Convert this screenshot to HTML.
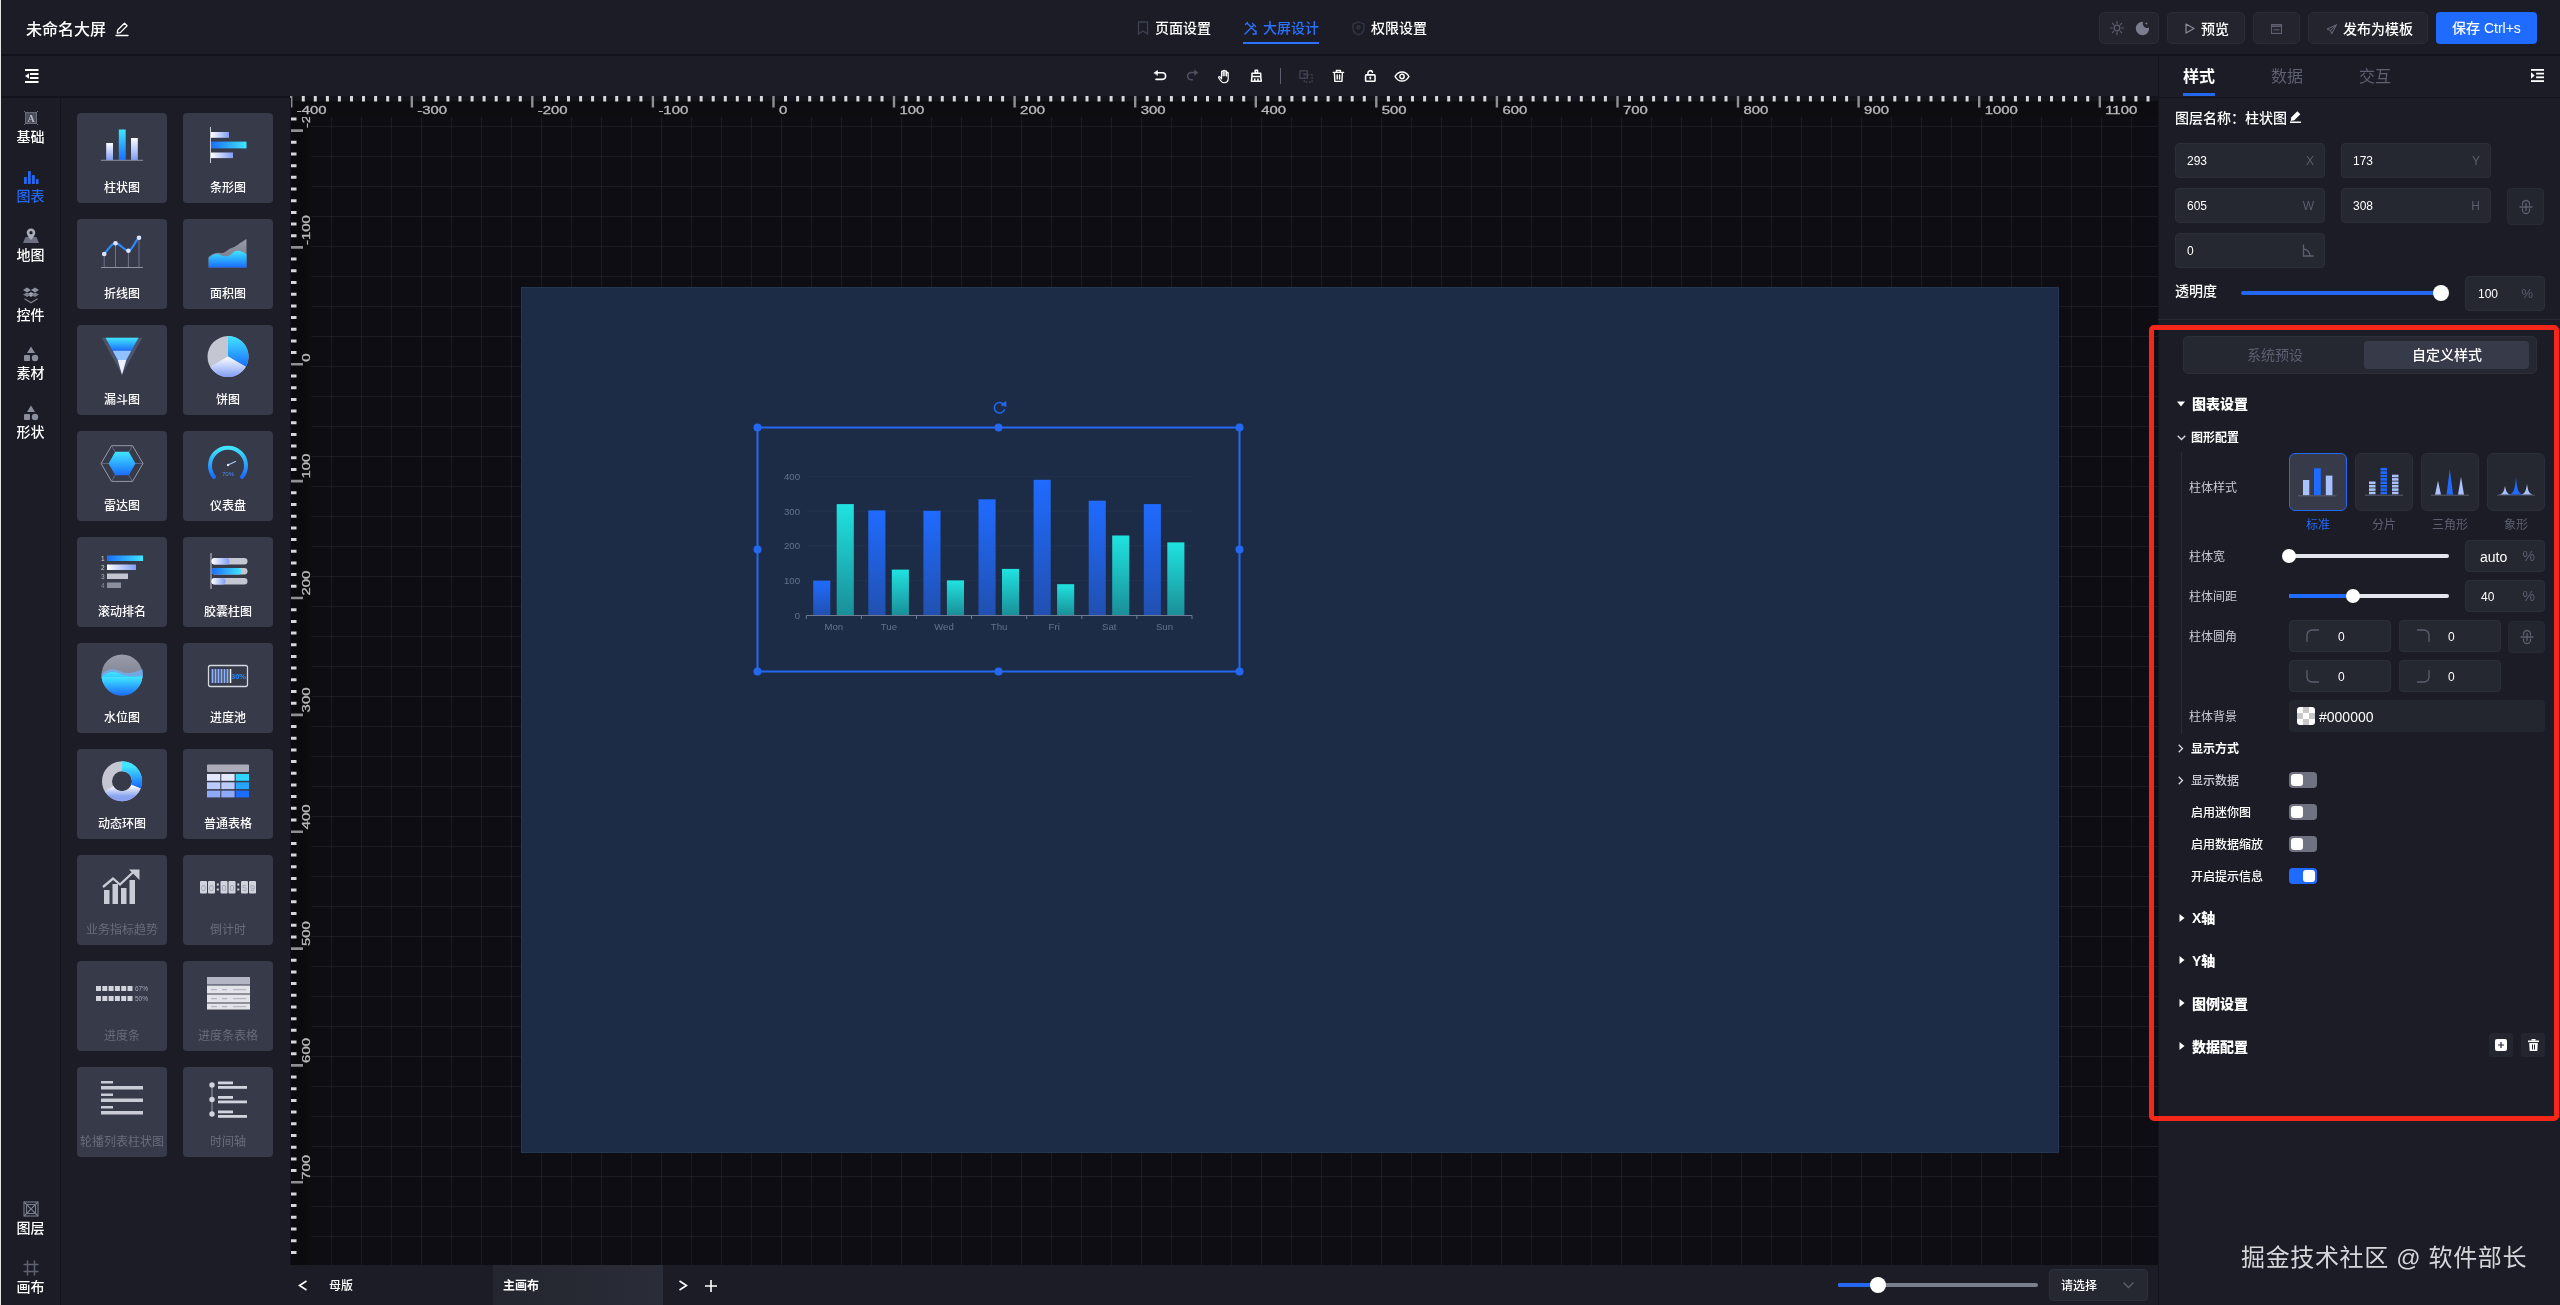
<!DOCTYPE html>
<html lang="zh-CN">
<head>
<meta charset="utf-8">
<title>未命名大屏</title>
<style>
*{box-sizing:border-box;margin:0;padding:0}
html,body{width:2560px;height:1305px;overflow:hidden;background:#1b1c26}
body{position:relative;font-family:"Liberation Sans","Noto Sans CJK SC",sans-serif;color:#fff;font-size:12px;line-height:1}
.abs{position:absolute}
svg{display:block;overflow:visible}
#wrap{position:absolute;left:0;top:0;width:2560px;height:1305px;will-change:transform}
.t{position:absolute;white-space:nowrap;line-height:1}
/* header */
#hdr{position:absolute;left:0;top:0;width:2560px;height:56px;background:#1b1c26;border-bottom:2px solid #12121a}
#tb{position:absolute;left:0;top:56px;width:2560px;height:40px;background:#1b1c26}
#tbline{position:absolute;left:0;top:96px;width:290px;height:2px;background:#13131b}
.btn{position:absolute;top:12px;height:32px;border:1px solid #2b2d38;background:#23242e;border-radius:5px}
/* left nav */
#nav{position:absolute;left:0;top:98px;width:61px;height:1207px;background:#1b1c26;border-right:1px solid #12121a}
.ni{position:absolute;left:0;width:61px;text-align:center;font-size:14px;font-weight:500;color:#fff}
.ni svg{margin:0 auto 4px}
/* palette */
#pal{position:absolute;left:62px;top:98px;width:228px;height:1207px;background:#1b1c26}
.card{position:absolute;width:90px;height:90px;background:#373a49;border-radius:4px}
.card span{position:absolute;left:-10px;right:-10px;top:69px;text-align:center;font-size:12px;font-weight:500;color:#fff;white-space:nowrap}
.card.dis span{color:#686c7c;font-weight:400}
.card svg{position:absolute;left:25px;top:10px}
/* right panel */
#rp{position:absolute;left:2158px;top:56px;width:402px;height:1249px;background:#1b1c26}
.inp{position:absolute;height:35px;background:#252731;border:1px solid #2c2e3a;border-radius:4px}
.inp b{position:absolute;left:11px;top:11px;font-weight:400;font-size:12px;color:#fff}
.inp i{position:absolute;right:10px;top:11px;font-style:normal;font-size:12px;color:#5a5e6e}
.lab{position:absolute;font-size:12px;color:#c9cbd3;white-space:nowrap}
.sw{position:absolute;width:28px;height:16px;border-radius:4px;background:#6f7280}
.sw:after{content:"";position:absolute;left:2px;top:2px;width:12px;height:12px;border-radius:3px;background:#fff}
.sw.on{background:#1f6bff}
.sw.on:after{left:14px}
</style>
</head>
<body>
<div id="wrap">
<!-- ================= HEADER ================= -->
<div id="hdr">
  <div class="t" style="left:26px;top:22px;font-size:16px;font-weight:500">未命名大屏</div>
  <svg class="abs" style="left:114px;top:20.500px" width="16" height="16" viewBox="0 0 16 16" fill="none" stroke="#fff" stroke-width="1.3" stroke-linecap="round" stroke-linejoin="round"><path d="M10.5 2.2l2.6 2.6L6.3 11.6l-3 .5.4-3.1z"/><path d="M2 14.5h12"/></svg>
  <!-- center tabs -->
  <svg class="abs" style="left:1137px;top:21px" width="12" height="14" viewBox="0 0 12 14" fill="none" stroke="#3d404e" stroke-width="1.3"><path d="M1.5 1h9v12l-4.5-3-4.5 3z"/></svg>
  <div class="t" style="left:1155px;top:21px;font-size:14px;font-weight:500">页面设置</div>
  <svg class="abs" style="left:1243px;top:21px" width="15" height="15" viewBox="0 0 15 15" fill="none" stroke="#2a72ff" stroke-width="1.4" stroke-linecap="round"><path d="M2 13L11 4M9.5 2.5l3 3M4 2l9 9M2.5 3.5l2-2M10 13h3v-3"/></svg>
  <div class="t" style="left:1263px;top:21px;font-size:14px;font-weight:500;color:#2a72ff">大屏设计</div>
  <div class="abs" style="left:1243px;top:42px;width:76px;height:2px;background:#2a72ff"></div>
  <svg class="abs" style="left:1352px;top:21px" width="13" height="15" viewBox="0 0 13 15" fill="none" stroke="#343744" stroke-width="1.3"><path d="M6.5 1l5.5 2v4.5c0 3-2.4 5.3-5.5 6.5C3.400 12.800 1 10.500 1 7.500V3z"/><circle cx="6.500" cy="6.500" r="1.500"/></svg>
  <div class="t" style="left:1371px;top:21px;font-size:14px;font-weight:500">权限设置</div>
  <!-- right buttons -->
  <div class="btn" style="left:2099px;width:60px">
    <svg class="abs" style="left:9px;top:7px" width="16" height="16" viewBox="0 0 16 16" fill="none" stroke="#5d606f" stroke-width="1.2" stroke-linecap="round"><circle cx="8" cy="8" r="2.800"/><path d="M8 1.500v1.800M8 12.700v1.800M1.500 8h1.800M12.700 8h1.800M3.400 3.400l1.300 1.300M11.300 11.300l1.300 1.300M3.400 12.600l1.300-1.300M11.300 4.700l1.300-1.300"/></svg>
    <svg class="abs" style="left:35px;top:7px" width="16" height="16" viewBox="0 0 16 16" fill="#7a7d8c"><path d="M8.200 1.800a4.300 4.300 0 0 0 5.900 5.600A6.700 6.700 0 1 1 8.200 1.800z"/><path d="M11.300 2l.45 1.050 1.050.45-1.050.45-.45 1.050-.45-1.050L9.800 3.500l1.050-.45z"/></svg>
  </div>
  <div class="btn" style="left:2167px;width:78px">
    <svg class="abs" style="left:17px;top:10px" width="10" height="11" viewBox="0 0 10 11" fill="none" stroke="#8b8e9b" stroke-width="1.200" stroke-linejoin="round"><path d="M1 1l8 4.500-8 4.500z"/></svg>
    <div class="t" style="left:33px;top:9px;font-size:14px;font-weight:500">预览</div>
  </div>
  <div class="btn" style="left:2253px;width:47px">
    <svg class="abs" style="left:17px;top:11px" width="11" height="10" viewBox="0 0 11 10" fill="none" stroke="#5d606f" stroke-width="1.100"><rect x=".55" y=".55" width="9.900" height="8.900"/><path d="M.5 2.200h10" stroke-width="1.600"/><path d="M2.500 5.800h6"/></svg>
  </div>
  <div class="btn" style="left:2308px;width:120px">
    <svg class="abs" style="left:17px;top:11px" width="11.500" height="11" viewBox="0 0 14 14" fill="none" stroke="#6a6d7b" stroke-width="1.200" stroke-linejoin="round"><path d="M13 1L1 6.500l4.500 1.800L7 12.500z"/><path d="M13 1L5.500 8.300"/></svg>
    <div class="t" style="left:34px;top:9px;font-size:14px;font-weight:500">发布为模板</div>
  </div>
  <div class="abs" style="left:2436px;top:12px;width:101px;height:32px;background:#1f6bff;border-radius:4px">
    <div class="t" style="left:16px;top:9px;font-size:14px;font-weight:500">保存 Ctrl+s</div>
  </div>
</div>
<!-- ================= TOOLBAR ================= -->
<div id="tb">
  <svg class="abs" style="left:25px;top:13px" width="14" height="14" viewBox="0 0 14 14" fill="#fff"><rect x="0" y="0" width="13.500" height="2"/><rect x="0" y="12" width="13.500" height="2"/><rect x="5" y="4" width="8.500" height="2"/><rect x="5" y="8" width="8.500" height="2"/><path d="M0 7l4-2.800v5.600z"/></svg>
</div>
<div id="tbline"></div>
<!-- toolbar icons (centres at y=76) -->
<svg class="abs" style="left:1153px;top:70px" width="14" height="12" viewBox="0 0 14 12" fill="none" stroke="#fff" stroke-width="1.600" stroke-linecap="round" stroke-linejoin="round"><path d="M3.500 2.800h5.800a3.300 3.300 0 0 1 0 6.600H3"/><path d="M1.200 2.800L4.500.5v4.600z" fill="#fff" stroke-width=".6"/></svg>
<svg class="abs" style="left:1185px;top:68px" width="14" height="14" viewBox="0 0 14 14" fill="none" stroke="#4e5161" stroke-width="1.500" stroke-linecap="round" stroke-linejoin="round"><path d="M10 4.500H6.300a3.600 3.600 0 0 0-.3 7.200h1.500"/><path d="M12.800 4.500L9.500 2v5z" fill="#4e5161" stroke-width=".6"/></svg>
<svg class="abs" style="left:1217.300px;top:68.500px" width="13.300" height="15" viewBox="0 0 16 18" fill="none" stroke="#fff" stroke-width="1.450" stroke-linecap="round" stroke-linejoin="round"><path d="M5.500 9V3.500a1 1 0 0 1 2 0V8M7.500 8V2.500a1 1 0 0 1 2 0V8M9.500 8V3.200a1 1 0 0 1 2 0V8.500M11.500 8.500V5a1 1 0 0 1 2 0v6.500c0 3-2 5-4.800 5-2.400 0-3.600-1.200-4.700-3L2 10.500c-.5-1 .8-1.900 1.600-1l1.900 2.200V9"/></svg>
<svg class="abs" style="left:1249.700px;top:69px" width="12.700" height="13.500" viewBox="0 0 16 17" fill="none" stroke="#fff" stroke-width="1.900" stroke-linejoin="round"><path d="M6.500 1.500h3v4h-3z"/><path d="M2.500 5.500h11v4h-11z"/><path d="M2.500 9.500L1.800 15.500h12.400L13.500 9.500"/><path d="M6 12v3.500M10 12v3.500"/></svg>
<div class="abs" style="left:1280px;top:68px;width:1px;height:16px;background:#5b5e6c"></div>
<svg class="abs" style="left:1299px;top:69.500px" width="14" height="13" viewBox="0 0 16 15" fill="none" stroke="#454857" stroke-width="1.400"><rect x="1" y="1" width="8.500" height="8.500"/><rect x="6" y="5.500" width="9" height="8.500" stroke-dasharray="2.200 1.600"/><path d="M4.500 4.500h5v5" stroke-width="1.100"/></svg>
<svg class="abs" style="left:1331.600px;top:69px" width="12.800" height="13.600" viewBox="0 0 16 17" fill="none" stroke="#fff" stroke-width="1.750" stroke-linejoin="round" stroke-linecap="round"><path d="M1.500 4.200h13"/><path d="M5.500 4V1.800h5V4"/><path d="M3 4.500l.6 11h8.800l.6-11"/><path d="M6.500 7.500v5M9.500 7.500v5"/></svg>
<svg class="abs" style="left:1363.700px;top:69px" width="12.600" height="13.400" viewBox="0 0 16 17" fill="none" stroke="#fff" stroke-width="2" stroke-linejoin="round" stroke-linecap="round"><rect x="2" y="7.500" width="12" height="8" rx="1"/><path d="M5 7.500V5a3 3 0 0 1 5.800-1"/><path d="M8 10.500v2"/></svg>
<svg class="abs" style="left:1394px;top:69.500px" width="16" height="13" viewBox="0 0 18 15" fill="none" stroke="#fff" stroke-width="1.700" stroke-linejoin="round"><path d="M1 7.500C3 3.900 5.800 2.200 9 2.200s6 1.700 8 5.300c-2 3.600-4.800 5.300-8 5.300S3 11.100 1 7.500z"/><circle cx="9" cy="7.500" r="2.500"/></svg>
<!-- ================= LEFT NAV ================= -->
<div id="nav">
<div class="ni" style="top:12px;color:#fff"><svg width="16" height="16" viewBox="0 0 16 16"><rect x="2.500" y="2.500" width="11" height="11" fill="#4a4c5a" stroke="#777a88" stroke-width=".8"/><path d="M1 1l2.500 2.500M15 1l-2.500 2.500M1 15l2.500-2.500M15 15l-2.500-2.500" stroke="#6b6e7c" stroke-width="1"/><text x="8" y="12" font-size="10" font-family="Liberation Serif,serif" font-weight="700" text-anchor="middle" fill="#b8bac4">A</text></svg>基础</div>
<div class="ni" style="top:71px;color:#2468f2"><svg width="16" height="16" viewBox="0 0 16 16" fill="#2468f2"><rect x="1" y="8" width="2.800" height="7" rx=".6"/><rect x="5" y="2" width="2.800" height="13" rx=".6"/><rect x="9" y="6" width="2.800" height="9" rx=".6"/><rect x="13" y="10" width="2.500" height="5" rx=".6"/></svg>图表</div>
<div class="ni" style="top:130px;color:#fff"><svg width="18" height="16" viewBox="0 0 18 16"><path d="M1 15l2.500-6h11l2.500 6z" fill="#6d7080"/><path d="M9 0.500c-2.500 0-4.300 1.900-4.300 4.200 0 2.700 4.300 7.300 4.300 7.300s4.300-4.600 4.300-7.300c0-2.300-1.800-4.200-4.300-4.200z" fill="#a9acb8"/><circle cx="9" cy="4.700" r="1.600" fill="#1c1d27"/></svg>地图</div>
<div class="ni" style="top:189px;color:#fff"><svg width="18" height="17" viewBox="0 0 18 17" fill="#7b7e8d"><path d="M5 0.500l4 2.500-4 2.500-4-2.500zM13 0.500l4 2.500-4 2.500-4-2.500z" fill="#8e91a0"/><path d="M9 5l4 2.500-4 2.500-4-2.500z" fill="#a5a8b5"/><path d="M1 7.500l4-2 4 2.500 4-2.500 4 2-4 2.500-4-2.300-4 2.300z"/><path d="M2.500 11l6.500 4 6.500-4v1.500l-6.500 4-6.500-4z"/></svg>控件</div>
<div class="ni" style="top:248px;color:#fff"><svg width="18" height="16" viewBox="0 0 18 16" fill="#8a8d9b"><path d="M9 0.500l4 6.500h-8z"/><rect x="2" y="9" width="6" height="6" rx="1"/><circle cx="13" cy="12" r="3.200"/></svg>素材</div>
<div class="ni" style="top:307px;color:#fff"><svg width="18" height="16" viewBox="0 0 18 16" fill="#8a8d9b"><path d="M9 0.500l4 6.500h-8z"/><rect x="2" y="9" width="6" height="6" rx="1"/><circle cx="13" cy="12" r="3.200"/></svg>形状</div>
<div class="ni" style="top:1103px;color:#fff"><svg width="16" height="16" viewBox="0 0 16 16" fill="none" stroke="#7b7e8d" stroke-width="1.100"><rect x="1" y="1" width="14" height="14"/><rect x="3.500" y="3.500" width="9" height="9"/><path d="M1 1l14 14M15 1L1 15"/></svg>图层</div>
<div class="ni" style="top:1162px;color:#fff"><svg width="16" height="16" viewBox="0 0 16 16" fill="none" stroke="#5f6271" stroke-width="1.500"><path d="M4.500 0.500v15M11.500 0.500v15M0.500 4.500h15M0.500 11.500h15"/></svg>画布</div>
</div>
<!-- ================= PALETTE ================= -->
<div id="pal">
<svg width="0" height="0" style="position:absolute"><defs>
<linearGradient id="gB" x1="0" y1="0" x2="0" y2="1"><stop offset="0" stop-color="#40e6ff"/><stop offset="1" stop-color="#1a6dff"/></linearGradient>
<linearGradient id="gW" x1="0" y1="0" x2="0" y2="1"><stop offset="0" stop-color="#ffffff"/><stop offset="1" stop-color="#7f9df5"/></linearGradient>
<linearGradient id="gBh" x1="1" y1="0" x2="0" y2="0"><stop offset="0" stop-color="#40e6ff"/><stop offset="1" stop-color="#1a6dff"/></linearGradient>
<linearGradient id="gWh" x1="0" y1="0" x2="1" y2="0"><stop offset="0" stop-color="#ffffff"/><stop offset="1" stop-color="#7f9df5"/></linearGradient>
<linearGradient id="gG" x1="0" y1="0" x2="0" y2="1"><stop offset="0" stop-color="#9a9caa"/><stop offset="1" stop-color="#6d7080"/></linearGradient>
<linearGradient id="gGw" x1="0" y1="0" x2="0" y2="1"><stop offset="0" stop-color="#e2e3ea"/><stop offset="1" stop-color="#b4b6c4"/></linearGradient>
</defs></svg>
<!-- CARDS_BEGIN -->
<div class="card" style="left:15px;top:15px"><svg width="40" height="44" viewBox="0 0 40 44"><rect x="4.200" y="20" width="6.800" height="17" fill="url(#gW)"/><rect x="16.800" y="6.500" width="6.900" height="30.500" fill="url(#gB)"/><rect x="29" y="15" width="6.800" height="22" fill="url(#gW)"/><rect x="-1" y="36.800" width="42" height="1" fill="#8d90a0"/></svg><span>柱状图</span></div>
<div class="card" style="left:121px;top:15px"><svg width="40" height="44" viewBox="0 0 40 44"><rect x="2" y="4" width="1" height="36" fill="#c9cbd6"/><rect x="3" y="9" width="18" height="5.800" fill="url(#gWh)"/><rect x="3" y="18.600" width="35.500" height="6.800" fill="url(#gBh)"/><rect x="3" y="29.500" width="22" height="5.600" fill="url(#gWh)"/></svg><span>条形图</span></div>
<div class="card" style="left:15px;top:121px"><svg width="40" height="44" viewBox="0 0 40 44"><path d="M2.200 25V38M13.500 14V38M26.400 22V38M37 9V38" stroke="#80839a" stroke-width=".8"/><rect x="-1" y="38" width="42" height="1" fill="#8d90a0"/><path d="M2.200 25C6 21 9.500 14.200 13.500 14.200s9 7.600 12.900 7.600S34 10 37 8.700" fill="none" stroke="#2b8cff" stroke-width="2.200" stroke-linecap="round"/><circle cx="2.200" cy="25" r="2.300" fill="#dfe3ff"/><circle cx="13.500" cy="14.200" r="2.300" fill="#dfe3ff"/><circle cx="26.400" cy="21.800" r="2.300" fill="#dfe3ff"/><circle cx="37" cy="8.700" r="2.300" fill="#dfe3ff"/></svg><span>折线图</span></div>
<div class="card" style="left:121px;top:121px"><svg width="40" height="44" viewBox="0 0 40 44"><path d="M.6 38.500V28c5-4 8-5 12-4s7-4 11-5 8-5 14.900-9v28.500z" fill="url(#gG)"/><path d="M.6 38.500V29c4-4 8-5 12-3s8 2 12-2 9-2 13.900 1v13.500z" fill="url(#gB)"/></svg><span>面积图</span></div>
<div class="card" style="left:15px;top:227px"><svg width="40" height="44" viewBox="0 0 40 44"><path d="M-.2 2.800h40.500L20 39.800z" fill="#5d6b8f" opacity=".55"/><path d="M3.500 2.800h33l-7.200 13h-18.600z" fill="url(#gB)"/><path d="M10.700 15.800h18.600L24.300 25h-8.600z" fill="#8fc0ff"/><path d="M15.700 25h8.600L20 39.800z" fill="#eef1ff"/></svg><span>漏斗图</span></div>
<div class="card" style="left:121px;top:227px"><svg width="40" height="44" viewBox="0 0 40 44"><circle cx="20" cy="21.600" r="20.500" fill="#c4c6d2"/><path d="M20 21.600V1.100a20.500 20.500 0 0 1 17.750 30.750z" fill="url(#gB)"/><path d="M20 21.600l17.750 10.250a20.500 20.500 0 0 1-35.500 0z" fill="url(#gW)"/></svg><span>饼图</span></div>
<div class="card" style="left:15px;top:333px"><svg width="40" height="44" viewBox="0 0 40 44"><path d="M-.9 22.500L9.500 4.700h21L41 22.500 30.500 40.400h-21z" fill="none" stroke="#9799a8" stroke-width="1"/><path d="M-.9 22.500H41M9.500 4.700l21 35.700M30.500 4.700l-21 35.700" stroke="#80839a" stroke-width=".6"/><path d="M6.500 22.500l6.750-11.700h13.500L33.500 22.500l-6.750 11.700h-13.500z" fill="url(#gB)"/></svg><span>雷达图</span></div>
<div class="card" style="left:121px;top:333px"><svg width="40" height="44" viewBox="0 0 40 44"><path d="M6 36A18 18 0 1 1 34 36" fill="none" stroke="url(#gB)" stroke-width="4" stroke-linecap="round"/><path d="M20 24l7.500-3.500" stroke="#9fd0ff" stroke-width="1.200" stroke-linecap="round"/><circle cx="20" cy="24" r="1.200" fill="#dfe3ff"/><text x="20" y="35" font-size="6" text-anchor="middle" fill="#3f8dff" font-family="Liberation Sans,sans-serif">70%</text></svg><span>仪表盘</span></div>
<div class="card" style="left:15px;top:439px"><svg width="40" height="44" viewBox="0 0 40 44"><text x="-1" y="13.500" font-size="6.500" fill="#d8dae4" font-family="Liberation Sans,sans-serif">1</text><text x="-1" y="22.500" font-size="6.500" fill="#d8dae4" font-family="Liberation Sans,sans-serif">2</text><text x="-1" y="31.500" font-size="6.500" fill="#b0b2c0" font-family="Liberation Sans,sans-serif">3</text><text x="-1" y="40.500" font-size="6.500" fill="#8b8e9d" font-family="Liberation Sans,sans-serif">4</text><rect x="5" y="8.500" width="36" height="5.500" fill="url(#gBh)"/><rect x="5" y="17.500" width="29" height="5.500" fill="url(#gWh)"/><rect x="5" y="26.500" width="21" height="5.500" fill="#c2c4d0"/><rect x="5" y="35.500" width="14" height="5.500" fill="#8b8e9d"/></svg><span>滚动排名</span></div>
<div class="card" style="left:121px;top:439px"><svg width="40" height="44" viewBox="0 0 40 44"><rect x="2.500" y="6" width="1" height="36" fill="#c9cbd6"/><rect x="3.500" y="11" width="36" height="6.500" rx="3.250" fill="#c4c6d2"/><rect x="3.500" y="11" width="18" height="6.500" rx="3.250" fill="url(#gWh)"/><rect x="3.500" y="21" width="36" height="6.500" rx="3.250" fill="#c4c6d2"/><rect x="3.500" y="21" width="30" height="6.500" rx="3.250" fill="url(#gBh)"/><rect x="3.500" y="31" width="36" height="6.500" rx="3.250" fill="#c4c6d2"/><rect x="3.500" y="31" width="14" height="6.500" rx="3.250" fill="url(#gWh)"/></svg><span>胶囊柱图</span></div>
<div class="card" style="left:15px;top:545px"><svg width="40" height="44" viewBox="0 0 40 44"><circle cx="20" cy="22" r="20.500" fill="url(#gG)"/><path d="M-.5 21c5-5 12-6 18-3s13 2.500 23-2A20.500 20.500 0 0 1 -.3 25z" fill="#6db5ff" opacity=".7"/><path d="M-.4 24c6-6 13-6 19-3s14 3 21.800 1.200A20.500 20.500 0 0 1 -.4 24z" fill="url(#gB)"/><path d="M-.4 24a20.500 20.500 0 0 0 40.800 0z" fill="url(#gB)"/></svg><span>水位图</span></div>
<div class="card" style="left:121px;top:545px"><svg width="40" height="44" viewBox="0 0 40 44"><rect x="0.500" y="12.500" width="39" height="21" rx="2" fill="none" stroke="#d3d5df" stroke-width="1.300"/><path d="M4.500 16v14M7.500 16v14M10.500 16v14M13.500 16v14M16.500 16v14M19.500 16v14" stroke="#8fb4ff" stroke-width="1.800"/><path d="M22.500 16v14" stroke="#fff" stroke-width="1.500"/><text x="30.500" y="26" font-size="7.500" font-weight="700" text-anchor="middle" fill="#2b8cff" font-family="Liberation Sans,sans-serif">30%</text></svg><span>进度池</span></div>
<div class="card" style="left:15px;top:651px"><svg width="40" height="44" viewBox="0 0 40 44"><circle cx="20" cy="22.200" r="15" fill="none" stroke="#c4c6d2" stroke-width="10"/><path d="M20 7.200A15 15 0 0 1 34 27.600" fill="none" stroke="url(#gB)" stroke-width="10"/><path d="M34 27.600A15 15 0 0 1 7 29.700" fill="none" stroke="url(#gW)" stroke-width="10" opacity=".85"/></svg><span>动态环图</span></div>
<div class="card" style="left:121px;top:651px"><svg width="40" height="44" viewBox="0 0 40 44"><rect x="-1" y="5.500" width="42" height="7.500" rx="1" fill="#a9abb9"/><rect x="-1" y="15" width="13.300" height="6.800" fill="#e4e8ff"/><rect x="13.300" y="15" width="13.300" height="6.800" fill="#e4e8ff"/><rect x="-1" y="23.300" width="13.300" height="6.800" fill="#bccbff"/><rect x="13.300" y="23.300" width="13.300" height="6.800" fill="#bccbff"/><rect x="-1" y="31.600" width="13.300" height="6.800" fill="#8fa9fa"/><rect x="13.300" y="31.600" width="13.300" height="6.800" fill="#8fa9fa"/><rect x="27.700" y="15" width="13.300" height="6.800" fill="#2fd4ff"/><rect x="27.700" y="23.300" width="13.300" height="6.800" fill="#26a4ff"/><rect x="27.700" y="31.600" width="13.300" height="6.800" fill="#1a6dff"/></svg><span>普通表格</span></div>
<div class="card dis" style="left:15px;top:757px"><svg width="40" height="44" viewBox="0 0 40 44"><g fill="#c9cbd5"><rect x="2" y="25" width="5.500" height="14"/><rect x="10.500" y="19" width="5.500" height="20"/><rect x="19" y="23" width="5.500" height="16"/><rect x="27.500" y="15" width="5.500" height="24"/></g><path d="M1 22l10-8.500 7 6 15-14" fill="none" stroke="#c9cbd5" stroke-width="2.300"/><path d="M27 4.500h10.500V15z" fill="#c9cbd5"/></svg><span>业务指标趋势</span></div>
<div class="card dis" style="left:121px;top:757px"><svg width="40" height="44" viewBox="0 0 40 44"><rect x="-8" y="16" width="7" height="12.500" rx="1" fill="#d2d4dd"/><text x="-4.5" y="26" font-size="9" text-anchor="middle" fill="#9c9fae" font-family="Liberation Sans,sans-serif">0</text><rect x="0" y="16" width="7" height="12.500" rx="1" fill="#d2d4dd"/><text x="3.5" y="26" font-size="9" text-anchor="middle" fill="#9c9fae" font-family="Liberation Sans,sans-serif">0</text><rect x="12.5" y="16" width="7" height="12.500" rx="1" fill="#d2d4dd"/><text x="16.0" y="26" font-size="9" text-anchor="middle" fill="#9c9fae" font-family="Liberation Sans,sans-serif">0</text><rect x="20.5" y="16" width="7" height="12.500" rx="1" fill="#d2d4dd"/><text x="24.0" y="26" font-size="9" text-anchor="middle" fill="#9c9fae" font-family="Liberation Sans,sans-serif">0</text><rect x="33" y="16" width="7" height="12.500" rx="1" fill="#d2d4dd"/><text x="36.5" y="26" font-size="9" text-anchor="middle" fill="#9c9fae" font-family="Liberation Sans,sans-serif">5</text><rect x="41" y="16" width="7" height="12.500" rx="1" fill="#d2d4dd"/><text x="44.5" y="26" font-size="9" text-anchor="middle" fill="#9c9fae" font-family="Liberation Sans,sans-serif">9</text><g fill="#d2d4dd"><rect x="8.800" y="18.500" width="2" height="2"/><rect x="8.800" y="23.500" width="2" height="2"/><rect x="29.300" y="18.500" width="2" height="2"/><rect x="29.300" y="23.500" width="2" height="2"/></g></svg><span>倒计时</span></div>
<div class="card dis" style="left:15px;top:863px"><svg width="40" height="44" viewBox="0 0 40 44"><g fill="#d2d4dd"><rect x="-6.0" y="15" width="5" height="5"/><rect x="0.3" y="15" width="5" height="5"/><rect x="6.6" y="15" width="5" height="5"/><rect x="12.9" y="15" width="5" height="5"/><rect x="19.2" y="15" width="5" height="5"/><rect x="25.5" y="15" width="5" height="5"/><rect x="-6.0" y="25" width="5" height="5"/><rect x="0.3" y="25" width="5" height="5"/><rect x="6.6" y="25" width="5" height="5"/><rect x="12.9" y="25" width="5" height="5"/><rect x="19.2" y="25" width="5" height="5"/><rect x="25.5" y="25" width="5" height="5"/></g><text x="33" y="20" font-size="6.500" fill="#a9abb8" font-family="Liberation Sans,sans-serif">67%</text><text x="33" y="30" font-size="6.500" fill="#a9abb8" font-family="Liberation Sans,sans-serif">50%</text></svg><span>进度条</span></div>
<div class="card dis" style="left:121px;top:863px"><svg width="40" height="44" viewBox="0 0 40 44"><rect x="-1" y="6" width="43" height="7.500" fill="#b4b6c3"/><rect x="-1" y="14.500" width="43" height="8" fill="#e3e4ea"/><rect x="-1" y="23.500" width="43" height="8" fill="#e3e4ea"/><rect x="-1" y="32.500" width="43" height="6" fill="#e3e4ea"/><g fill="#b4b6c3"><rect x="3" y="18" width="6" height="1.200"/><rect x="14" y="18" width="5" height="1.200"/><rect x="25" y="18" width="13" height="1.200"/><rect x="3" y="27" width="6" height="1.200"/><rect x="14" y="27" width="5" height="1.200"/><rect x="25" y="27" width="13" height="1.200"/><rect x="3" y="35" width="6" height="1.200"/><rect x="14" y="35" width="5" height="1.200"/><rect x="25" y="35" width="13" height="1.200"/></g></svg><span>进度条表格</span></div>
<div class="card dis" style="left:15px;top:969px"><svg width="40" height="44" viewBox="0 0 40 44"><g fill="#c9cbd5"><rect x="-1" y="4" width="12" height="2.500"/><rect x="-1" y="9" width="42" height="3.500"/><rect x="-1" y="16.500" width="12" height="2.500"/><rect x="-1" y="21.500" width="42" height="3.500"/><rect x="-1" y="29" width="12" height="2.500"/><rect x="-1" y="34" width="42" height="3.500"/></g></svg><span>轮播列表柱状图</span></div>
<div class="card dis" style="left:121px;top:969px"><svg width="40" height="44" viewBox="0 0 40 44"><path d="M4 8v29" stroke="#9c9fae" stroke-width="1"/><g fill="#d2d4dd"><circle cx="4" cy="8" r="2.700"/><circle cx="4" cy="22.500" r="2.700"/><circle cx="4" cy="37" r="2.700"/><rect x="10" y="4.500" width="15" height="2.800"/><rect x="10" y="9" width="29" height="2.800"/><rect x="10" y="19" width="15" height="2.800"/><rect x="10" y="23.500" width="29" height="2.800"/><rect x="10" y="33.500" width="15" height="2.800"/><rect x="10" y="38" width="29" height="2.800"/></g></svg><span>时间轴</span></div>
<!-- CARDS_END -->
</div>
<!-- ================= CANVAS ================= -->
<div class="abs" style="left:290px;top:96px;width:1868px;height:1169px;background:#0e0d13;overflow:hidden">
  <div class="abs" style="left:21px;top:20px;width:1847px;height:1149px;background-image:linear-gradient(90deg,rgba(255,255,255,.06) 1px,transparent 1px),linear-gradient(rgba(255,255,255,.06) 1px,transparent 1px);background-size:30px 30px;background-position:20px 10px"></div>
  <div class="abs" style="left:0;top:0;width:24px;height:1169px;background:linear-gradient(90deg,#0b0b0f 0,#0b0b0f 14px,rgba(11,11,15,0) 24px)"></div>
</div>
<svg class="abs" style="left:0;top:0" width="2560" height="1305" viewBox="0 0 2560 1305">
  <g font-family="Liberation Sans,sans-serif" font-size="10.500" fill="#b9b9bd" stroke="#b9b9bd" stroke-width=".3"><text transform="translate(309.500 128.1) rotate(-90) scale(1.42 1)">-200</text><text transform="translate(309.500 244.9) rotate(-90) scale(1.42 1)">-100</text><text transform="translate(309.500 361.8) rotate(-90) scale(1.42 1)">0</text><text transform="translate(309.500 478.6) rotate(-90) scale(1.42 1)">100</text><text transform="translate(309.500 595.5) rotate(-90) scale(1.42 1)">200</text><text transform="translate(309.500 712.4) rotate(-90) scale(1.42 1)">300</text><text transform="translate(309.500 829.2) rotate(-90) scale(1.42 1)">400</text><text transform="translate(309.500 946.1) rotate(-90) scale(1.42 1)">500</text><text transform="translate(309.500 1062.9) rotate(-90) scale(1.42 1)">600</text><text transform="translate(309.500 1179.8) rotate(-90) scale(1.42 1)">700</text></g>
  <rect x="290" y="96" width="1868" height="21" fill="#0c0c11"/>
  <rect x="290" y="96" width="1868" height="5" fill="#1c1d27" opacity=".55"/>
  <path d="M290.0 96h2.400v11.500h-2.400zM410.6 96h2.400v11.500h-2.400zM531.1 96h2.400v11.500h-2.400zM651.7 96h2.400v11.500h-2.400zM772.3 96h2.400v11.500h-2.400zM892.8 96h2.400v11.500h-2.400zM1013.4 96h2.400v11.500h-2.400zM1134.0 96h2.400v11.500h-2.400zM1254.6 96h2.400v11.500h-2.400zM1375.1 96h2.400v11.500h-2.400zM1495.7 96h2.400v11.500h-2.400zM1616.3 96h2.400v11.500h-2.400zM1736.8 96h2.400v11.500h-2.400zM1857.4 96h2.400v11.500h-2.400zM1978.0 96h2.400v11.500h-2.400zM2098.6 96h2.400v11.500h-2.400z" fill="#8e8e93"/>
  <path d="M301.8 96h3v5.500h-3zM313.8 96h3v5.500h-3zM325.9 96h3v5.500h-3zM337.9 96h3v5.500h-3zM350.0 96h3v5.500h-3zM362.0 96h3v5.500h-3zM374.1 96h3v5.500h-3zM386.2 96h3v5.500h-3zM398.2 96h3v5.500h-3zM422.3 96h3v5.500h-3zM434.4 96h3v5.500h-3zM446.4 96h3v5.500h-3zM458.5 96h3v5.500h-3zM470.6 96h3v5.500h-3zM482.6 96h3v5.500h-3zM494.7 96h3v5.500h-3zM506.7 96h3v5.500h-3zM518.8 96h3v5.500h-3zM542.9 96h3v5.500h-3zM555.0 96h3v5.500h-3zM567.0 96h3v5.500h-3zM579.1 96h3v5.500h-3zM591.1 96h3v5.500h-3zM603.2 96h3v5.500h-3zM615.2 96h3v5.500h-3zM627.3 96h3v5.500h-3zM639.4 96h3v5.500h-3zM663.5 96h3v5.500h-3zM675.5 96h3v5.500h-3zM687.6 96h3v5.500h-3zM699.6 96h3v5.500h-3zM711.7 96h3v5.500h-3zM723.8 96h3v5.500h-3zM735.8 96h3v5.500h-3zM747.9 96h3v5.500h-3zM759.9 96h3v5.500h-3zM784.0 96h3v5.500h-3zM796.1 96h3v5.500h-3zM808.2 96h3v5.500h-3zM820.2 96h3v5.500h-3zM832.3 96h3v5.500h-3zM844.3 96h3v5.500h-3zM856.4 96h3v5.500h-3zM868.4 96h3v5.500h-3zM880.5 96h3v5.500h-3zM904.6 96h3v5.500h-3zM916.7 96h3v5.500h-3zM928.7 96h3v5.500h-3zM940.8 96h3v5.500h-3zM952.8 96h3v5.500h-3zM964.9 96h3v5.500h-3zM976.9 96h3v5.500h-3zM989.0 96h3v5.500h-3zM1001.1 96h3v5.500h-3zM1025.2 96h3v5.500h-3zM1037.2 96h3v5.500h-3zM1049.3 96h3v5.500h-3zM1061.3 96h3v5.500h-3zM1073.4 96h3v5.500h-3zM1085.5 96h3v5.500h-3zM1097.5 96h3v5.500h-3zM1109.6 96h3v5.500h-3zM1121.6 96h3v5.500h-3zM1145.7 96h3v5.500h-3zM1157.8 96h3v5.500h-3zM1169.9 96h3v5.500h-3zM1181.9 96h3v5.500h-3zM1194.0 96h3v5.500h-3zM1206.0 96h3v5.500h-3zM1218.1 96h3v5.500h-3zM1230.1 96h3v5.500h-3zM1242.2 96h3v5.500h-3zM1266.3 96h3v5.500h-3zM1278.4 96h3v5.500h-3zM1290.4 96h3v5.500h-3zM1302.5 96h3v5.500h-3zM1314.5 96h3v5.500h-3zM1326.6 96h3v5.500h-3zM1338.7 96h3v5.500h-3zM1350.7 96h3v5.500h-3zM1362.8 96h3v5.500h-3zM1386.9 96h3v5.500h-3zM1398.9 96h3v5.500h-3zM1411.0 96h3v5.500h-3zM1423.1 96h3v5.500h-3zM1435.1 96h3v5.500h-3zM1447.2 96h3v5.500h-3zM1459.2 96h3v5.500h-3zM1471.3 96h3v5.500h-3zM1483.3 96h3v5.500h-3zM1507.5 96h3v5.500h-3zM1519.5 96h3v5.500h-3zM1531.6 96h3v5.500h-3zM1543.6 96h3v5.500h-3zM1555.7 96h3v5.500h-3zM1567.7 96h3v5.500h-3zM1579.8 96h3v5.500h-3zM1591.9 96h3v5.500h-3zM1603.9 96h3v5.500h-3zM1628.0 96h3v5.500h-3zM1640.1 96h3v5.500h-3zM1652.1 96h3v5.500h-3zM1664.2 96h3v5.500h-3zM1676.3 96h3v5.500h-3zM1688.3 96h3v5.500h-3zM1700.4 96h3v5.500h-3zM1712.4 96h3v5.500h-3zM1724.5 96h3v5.500h-3zM1748.6 96h3v5.500h-3zM1760.7 96h3v5.500h-3zM1772.7 96h3v5.500h-3zM1784.8 96h3v5.500h-3zM1796.8 96h3v5.500h-3zM1808.9 96h3v5.500h-3zM1820.9 96h3v5.500h-3zM1833.0 96h3v5.500h-3zM1845.1 96h3v5.500h-3zM1869.2 96h3v5.500h-3zM1881.2 96h3v5.500h-3zM1893.3 96h3v5.500h-3zM1905.3 96h3v5.500h-3zM1917.4 96h3v5.500h-3zM1929.5 96h3v5.500h-3zM1941.5 96h3v5.500h-3zM1953.6 96h3v5.500h-3zM1965.6 96h3v5.500h-3zM1989.7 96h3v5.500h-3zM2001.8 96h3v5.500h-3zM2013.9 96h3v5.500h-3zM2025.9 96h3v5.500h-3zM2038.0 96h3v5.500h-3zM2050.0 96h3v5.500h-3zM2062.1 96h3v5.500h-3zM2074.1 96h3v5.500h-3zM2086.2 96h3v5.500h-3zM2110.3 96h3v5.500h-3zM2122.4 96h3v5.500h-3zM2134.4 96h3v5.500h-3zM2146.5 96h3v5.500h-3z" fill="#d6d6da"/>
  <path d="M291 129.3h12v2.600h-12zM291 246.1h12v2.600h-12zM291 363.0h12v2.600h-12zM291 479.8h12v2.600h-12zM291 596.7h12v2.600h-12zM291 713.6h12v2.600h-12zM291 830.4h12v2.600h-12zM291 947.3h12v2.600h-12zM291 1064.1h12v2.600h-12zM291 1181.0h12v2.600h-12z" fill="#8e8e93"/>
  <path d="M291 117.4h5.500v3h-5.500zM291 140.8h5.500v3h-5.500zM291 152.5h5.500v3h-5.500zM291 164.2h5.500v3h-5.500zM291 175.8h5.500v3h-5.500zM291 187.5h5.500v3h-5.500zM291 199.2h5.500v3h-5.500zM291 210.9h5.500v3h-5.500zM291 222.6h5.500v3h-5.500zM291 234.3h5.500v3h-5.500zM291 257.6h5.500v3h-5.500zM291 269.3h5.500v3h-5.500zM291 281.0h5.500v3h-5.500zM291 292.7h5.500v3h-5.500zM291 304.4h5.500v3h-5.500zM291 316.1h5.500v3h-5.500zM291 327.7h5.500v3h-5.500zM291 339.4h5.500v3h-5.500zM291 351.1h5.500v3h-5.500zM291 374.5h5.500v3h-5.500zM291 386.2h5.500v3h-5.500zM291 397.9h5.500v3h-5.500zM291 409.5h5.500v3h-5.500zM291 421.2h5.500v3h-5.500zM291 432.9h5.500v3h-5.500zM291 444.6h5.500v3h-5.500zM291 456.3h5.500v3h-5.500zM291 468.0h5.500v3h-5.500zM291 491.3h5.500v3h-5.500zM291 503.0h5.500v3h-5.500zM291 514.7h5.500v3h-5.500zM291 526.4h5.500v3h-5.500zM291 538.1h5.500v3h-5.500zM291 549.8h5.500v3h-5.500zM291 561.4h5.500v3h-5.500zM291 573.1h5.500v3h-5.500zM291 584.8h5.500v3h-5.500zM291 608.2h5.500v3h-5.500zM291 619.9h5.500v3h-5.500zM291 631.6h5.500v3h-5.500zM291 643.2h5.500v3h-5.500zM291 654.9h5.500v3h-5.500zM291 666.6h5.500v3h-5.500zM291 678.3h5.500v3h-5.500zM291 690.0h5.500v3h-5.500zM291 701.7h5.500v3h-5.500zM291 725.0h5.500v3h-5.500zM291 736.7h5.500v3h-5.500zM291 748.4h5.500v3h-5.500zM291 760.1h5.500v3h-5.500zM291 771.8h5.500v3h-5.500zM291 783.5h5.500v3h-5.500zM291 795.1h5.500v3h-5.500zM291 806.8h5.500v3h-5.500zM291 818.5h5.500v3h-5.500zM291 841.9h5.500v3h-5.500zM291 853.6h5.500v3h-5.500zM291 865.3h5.500v3h-5.500zM291 876.9h5.500v3h-5.500zM291 888.6h5.500v3h-5.500zM291 900.3h5.500v3h-5.500zM291 912.0h5.500v3h-5.500zM291 923.7h5.500v3h-5.500zM291 935.4h5.500v3h-5.500zM291 958.7h5.500v3h-5.500zM291 970.4h5.500v3h-5.500zM291 982.1h5.500v3h-5.500zM291 993.8h5.500v3h-5.500zM291 1005.5h5.500v3h-5.500zM291 1017.2h5.500v3h-5.500zM291 1028.8h5.500v3h-5.500zM291 1040.5h5.500v3h-5.500zM291 1052.2h5.500v3h-5.500zM291 1075.6h5.500v3h-5.500zM291 1087.3h5.500v3h-5.500zM291 1099.0h5.500v3h-5.500zM291 1110.6h5.500v3h-5.500zM291 1122.3h5.500v3h-5.500zM291 1134.0h5.500v3h-5.500zM291 1145.7h5.500v3h-5.500zM291 1157.4h5.500v3h-5.500zM291 1169.1h5.500v3h-5.500zM291 1192.4h5.500v3h-5.500zM291 1204.1h5.500v3h-5.500zM291 1215.8h5.500v3h-5.500zM291 1227.5h5.500v3h-5.500zM291 1239.2h5.500v3h-5.500zM291 1250.9h5.500v3h-5.500z" fill="#d6d6da"/>
  <g font-family="Liberation Sans,sans-serif" font-size="10.500" fill="#b9b9bd" stroke="#b9b9bd" stroke-width=".3"><text transform="translate(296.7 114) scale(1.42 1)">-400</text><text transform="translate(417.3 114) scale(1.42 1)">-300</text><text transform="translate(537.8 114) scale(1.42 1)">-200</text><text transform="translate(658.4 114) scale(1.42 1)">-100</text><text transform="translate(779.0 114) scale(1.42 1)">0</text><text transform="translate(899.5 114) scale(1.42 1)">100</text><text transform="translate(1020.1 114) scale(1.42 1)">200</text><text transform="translate(1140.7 114) scale(1.42 1)">300</text><text transform="translate(1261.3 114) scale(1.42 1)">400</text><text transform="translate(1381.8 114) scale(1.42 1)">500</text><text transform="translate(1502.4 114) scale(1.42 1)">600</text><text transform="translate(1623.0 114) scale(1.42 1)">700</text><text transform="translate(1743.5 114) scale(1.42 1)">800</text><text transform="translate(1864.1 114) scale(1.42 1)">900</text><text transform="translate(1984.7 114) scale(1.42 1)">1000</text><text transform="translate(2105.2 114) scale(1.42 1)">1100</text></g>
</svg>
<div class="abs" style="left:290px;top:98px;width:1px;height:1207px;background:#13131b"></div>
<!-- stage -->
<div class="abs" style="left:521px;top:287px;width:1538px;height:866px;background:#1c2c46;box-shadow:inset 0 0 0 1px rgba(255,255,255,.05)"></div>
<svg class="abs" style="left:0;top:0" width="2560" height="1305" viewBox="0 0 2560 1305">
  <defs>
    <linearGradient id="cB" x1="0" y1="0" x2="0" y2="1"><stop offset="0" stop-color="#1f6bff"/><stop offset="1" stop-color="#2150b0"/></linearGradient>
    <linearGradient id="cC" x1="0" y1="0" x2="0" y2="1"><stop offset="0" stop-color="#1fe3e0"/><stop offset="1" stop-color="#1a8e98"/></linearGradient>
  </defs>
  <path d="M806.3 580.7H1192.0M806.3 545.9H1192.0M806.3 511.1H1192.0M806.3 476.3H1192.0" stroke="#ffffff" stroke-opacity=".035" stroke-width="1" fill="none"/>
  <rect x="813.2" y="580.7" width="17.100" height="34.8" fill="url(#cB)"/><rect x="836.7" y="504.1" width="17.100" height="111.4" fill="url(#cC)"/><rect x="868.3" y="510.4" width="17.100" height="105.1" fill="url(#cB)"/><rect x="891.8" y="569.6" width="17.100" height="45.9" fill="url(#cC)"/><rect x="923.4" y="510.8" width="17.100" height="104.7" fill="url(#cB)"/><rect x="946.9" y="580.4" width="17.100" height="35.1" fill="url(#cC)"/><rect x="978.5" y="499.3" width="17.100" height="116.2" fill="url(#cB)"/><rect x="1002.0" y="568.9" width="17.100" height="46.6" fill="url(#cC)"/><rect x="1033.6" y="479.8" width="17.100" height="135.7" fill="url(#cB)"/><rect x="1057.1" y="584.2" width="17.100" height="31.3" fill="url(#cC)"/><rect x="1088.7" y="500.7" width="17.100" height="114.8" fill="url(#cB)"/><rect x="1112.2" y="535.5" width="17.100" height="80.0" fill="url(#cC)"/><rect x="1143.8" y="504.1" width="17.100" height="111.4" fill="url(#cB)"/><rect x="1167.3" y="542.4" width="17.100" height="73.1" fill="url(#cC)"/>
  <path d="M806.3 615.5H1192.0M806.3 615.5v3.500M861.4 615.5v3.500M916.5 615.5v3.500M971.6 615.5v3.500M1026.7 615.5v3.500M1081.8 615.5v3.500M1136.9 615.5v3.500M1192.0 615.5v3.500" stroke="#6f7b93" stroke-width="1" fill="none"/>
  <g font-family="Liberation Sans,sans-serif" font-size="9.600" fill="#66728d" text-anchor="middle"><text x="833.8" y="630">Mon</text><text x="888.9" y="630">Tue</text><text x="944.0" y="630">Wed</text><text x="999.1" y="630">Thu</text><text x="1054.2" y="630">Fri</text><text x="1109.3" y="630">Sat</text><text x="1164.5" y="630">Sun</text></g>
  <g font-family="Liberation Sans,sans-serif" font-size="9.600" fill="#66728d"><text x="800" y="618.9" text-anchor="end">0</text><text x="800" y="584.1" text-anchor="end">100</text><text x="800" y="549.3" text-anchor="end">200</text><text x="800" y="514.5" text-anchor="end">300</text><text x="800" y="479.7" text-anchor="end">400</text></g>
  <rect x="757.500" y="427.500" width="482" height="244" fill="none" stroke="#2468f2" stroke-width="2"/>
  <g fill="#2468f2"><circle cx="757.5" cy="427.5" r="4"/><circle cx="998.5" cy="427.5" r="4"/><circle cx="1239.5" cy="427.5" r="4"/><circle cx="757.5" cy="549.5" r="4"/><circle cx="1239.5" cy="549.5" r="4"/><circle cx="757.5" cy="671.5" r="4"/><circle cx="998.5" cy="671.5" r="4"/><circle cx="1239.5" cy="671.5" r="4"/></g>
  <g fill="none" stroke="#2468f2" stroke-width="1.500" stroke-linecap="round"><path d="M1003.800 404.500a5.300 5.300 0 1 0 .7 5.200"/><path d="M1001.500 404.800l4.300-3.300.3 4.600z" fill="#2468f2" stroke-width=".8"/></g>
</svg>
<div class="abs" style="left:290px;top:1265px;width:1868px;height:40px;background:#1b1c26">
  <div class="abs" style="left:203px;top:0;width:170px;height:40px;background:linear-gradient(90deg,#23252f,#2a2c37)"></div>
  <svg class="abs" style="left:8px;top:15px" width="10" height="11" viewBox="0 0 10 11" fill="none" stroke="#fff" stroke-width="1.600"><path d="M8.500 1L1.500 5.500l7 4.500"/></svg>
  <div class="t" style="left:39px;top:15px;font-size:12px;font-weight:500">母版</div>
  <div class="t" style="left:213px;top:15px;font-size:12px;font-weight:700">主画布</div>
  <svg class="abs" style="left:388px;top:15px" width="10" height="11" viewBox="0 0 10 11" fill="none" stroke="#fff" stroke-width="1.600"><path d="M1.500 1l7 4.500-7 4.500"/></svg>
  <svg class="abs" style="left:415px;top:15px" width="12" height="12" viewBox="0 0 12 12" fill="none" stroke="#fff" stroke-width="1.600"><path d="M6 0v12M0 6h12"/></svg>
  <div class="abs" style="left:1548px;top:18px;width:200px;height:4px;border-radius:2px;background:#7b7e8b"></div>
  <div class="abs" style="left:1548px;top:18px;width:40px;height:4px;border-radius:2px;background:#2468f2"></div>
  <div class="abs" style="left:1580px;top:12px;width:16px;height:16px;border-radius:8px;background:#fff"></div>
  <div class="abs" style="left:1759px;top:4px;width:99px;height:32px;background:#252731;border:1px solid #2d2f3b;border-radius:4px">
    <div class="t" style="left:11px;top:10px;font-size:12px;font-weight:500">请选择</div>
    <svg class="abs" style="left:73px;top:12px" width="11" height="7" viewBox="0 0 11 7" fill="none" stroke="#5d606f" stroke-width="1.300"><path d="M.5.5l5 5 5-5"/></svg>
  </div>
</div>
<!-- ================= RIGHT PANEL ================= -->
<div id="rp">
<div class="abs" style="left:0;top:40.500px;width:402px;height:1.500px;background:#13131b"></div><div class="abs" style="left:0;top:0;width:1px;height:1249px;background:#14141c"></div>
<div class="t" style="left:25px;top:13px;font-size:16px;font-weight:700">样式</div>
<div class="abs" style="left:25px;top:37px;width:32px;height:3px;background:#2468f2"></div>
<div class="t" style="left:113px;top:13px;font-size:16px;color:#5d6070">数据</div>
<div class="t" style="left:201px;top:13px;font-size:16px;color:#5d6070">交互</div>
<svg class="abs" style="left:373px;top:13px" width="13" height="13" viewBox="0 0 14 13" preserveAspectRatio="none" fill="#fff"><rect x="0" y="0" width="14" height="1.800"/><rect x="0" y="11.200" width="14" height="1.800"/><rect x="5.500" y="3.700" width="8.500" height="1.800"/><rect x="5.500" y="7.400" width="8.500" height="1.800"/><path d="M0 3.200l4 3.300-4 3.300z"/></svg>
<div class="t" style="left:17px;top:55px;font-size:14px;font-weight:500">图层名称：柱状图</div>
<svg class="abs" style="left:131px;top:54px" width="13" height="13" viewBox="0 0 13 13" fill="#fff"><path d="M8.300 1.200l3 3-6 6-3.600.8.700-3.700z"/><rect x="1" y="11.500" width="11" height="1.500"/></svg>
<div class="inp" style="left:17px;top:87px;width:150px"><b>293</b><i>X</i></div>
<div class="inp" style="left:183px;top:87px;width:150px"><b>173</b><i>Y</i></div>
<div class="inp" style="left:17px;top:132px;width:150px"><b>605</b><i>W</i></div>
<div class="inp" style="left:183px;top:132px;width:150px"><b>308</b><i>H</i></div>
<div class="inp" style="left:349px;top:132px;width:37px;height:37px;background:#23252f;border-color:#282a35"><svg class="abs" style="left:11px;top:10px" width="14" height="16" viewBox="0 0 14 16" fill="none" stroke="#5d606f" stroke-width="1.300" stroke-linecap="round"><path d="M3.500 6V5a3.500 3.500 0 0 1 7 0v1M3.500 10v1a3.500 3.500 0 0 0 7 0v-1M7 4.500v7M1 8h12"/></svg></div>
<div class="inp" style="left:17px;top:177px;width:150px"><b>0</b><svg class="abs" style="right:10px;top:10px" width="12" height="13" viewBox="0 0 12 13" fill="none" stroke="#5d606f" stroke-width="1.300"><path d="M1.500 0.500v11.500h10"/><path d="M1.500 5a7 7 0 0 1 6.500 7"/></svg></div>
<div class="t" style="left:17px;top:228px;font-size:14px;font-weight:500">透明度</div>
<div class="abs" style="left:83px;top:235px;width:200px;height:4px;border-radius:2px;background:#2468f2"></div>
<div class="abs" style="left:275px;top:229px;width:16px;height:16px;border-radius:8px;background:#fff"></div>
<div class="inp" style="left:307px;top:220px;width:80px;height:35px"><b style="top:11px;left:12px">100</b><i style="top:10px;font-size:13px;right:11px">%</i></div>
<div class="abs" style="left:0;top:263px;width:402px;height:1px;background:#252a33"></div>
<div class="abs" style="left:25px;top:280px;width:354px;height:38px;background:#252731;border:1px solid #2c2e3a;border-radius:5px">
  <div class="abs" style="left:180px;top:4px;width:165px;height:28px;background:#373a49;border-radius:4px"></div>
  <div class="t" style="left:63px;top:11px;font-size:14px;color:#5d6070">系统预设</div>
  <div class="t" style="left:228px;top:11px;font-size:14px;font-weight:500">自定义样式</div>
</div>
<svg class="abs" style="left:19px;top:345px" width="8" height="6" viewBox="0 0 8 6" fill="#fff"><path d="M0 .5h8L4 5.500z"/></svg><div class="t" style="left:34px;top:341px;font-size:14px;font-weight:900">图表设置</div>
<svg class="abs" style="left:19px;top:379px" width="9" height="6" viewBox="0 0 9 6" fill="none" stroke="#d9dae0" stroke-width="1.300"><path d="M.7.7l3.800 3.800L8.300.7"/></svg><div class="t" style="left:33px;top:376px;font-size:12px;font-weight:700">图形配置</div>
<div class="abs" style="left:23px;top:396px;width:1px;height:282px;background:#2a2c38"></div>
<div class="lab" style="left:31px;top:426px">柱体样式</div>
<div class="abs" style="left:131px;top:397px;width:58px;height:58px;border-radius:6px;background:#373a49;border:1px solid #2468f2"><svg class="abs" style="left:8px;top:8px" width="40" height="40" viewBox="0 0 40 40"><rect x="5" y="18" width="6.300" height="15.400" fill="#a9c2ff"/><rect x="16" y="6.300" width="6.800" height="27" fill="#1f6bff"/><rect x="27.800" y="13.600" width="6.600" height="19.800" fill="#a9c2ff"/><rect x="0" y="33.300" width="38.500" height="1" fill="#5b5e6e"/></svg></div><div class="t" style="left:131px;top:463px;width:58px;text-align:center;font-size:12px;color:#2468f2">标准</div><div class="abs" style="left:197px;top:397px;width:58px;height:58px;border-radius:6px;background:#252731;border:1px solid #2c2e3a"><svg class="abs" style="left:8px;top:8px" width="40" height="40" viewBox="0 0 40 40"><g transform="translate(0 -1.300)"><rect x="5" y="31.0" width="6.500" height="2.600" fill="#a9c2ff"/><rect x="5" y="27.6" width="6.500" height="2.600" fill="#a9c2ff"/><rect x="5" y="24.2" width="6.500" height="2.600" fill="#a9c2ff"/><rect x="5" y="20.8" width="6.500" height="2.600" fill="#a9c2ff"/><rect x="16.5" y="31.0" width="6.500" height="2.600" fill="#1f6bff"/><rect x="16.5" y="27.6" width="6.500" height="2.600" fill="#1f6bff"/><rect x="16.5" y="24.2" width="6.500" height="2.600" fill="#1f6bff"/><rect x="16.5" y="20.8" width="6.500" height="2.600" fill="#1f6bff"/><rect x="16.5" y="17.4" width="6.500" height="2.600" fill="#1f6bff"/><rect x="16.5" y="14.0" width="6.500" height="2.600" fill="#1f6bff"/><rect x="16.5" y="10.6" width="6.500" height="2.600" fill="#1f6bff"/><rect x="16.5" y="7.2" width="6.500" height="2.600" fill="#1f6bff"/><rect x="28" y="31.0" width="6.500" height="2.600" fill="#a9c2ff"/><rect x="28" y="27.6" width="6.500" height="2.600" fill="#a9c2ff"/><rect x="28" y="24.2" width="6.500" height="2.600" fill="#a9c2ff"/><rect x="28" y="20.8" width="6.500" height="2.600" fill="#a9c2ff"/><rect x="28" y="17.4" width="6.500" height="2.600" fill="#a9c2ff"/><rect x="28" y="14.0" width="6.500" height="2.600" fill="#a9c2ff"/><rect x="1" y="34" width="38" height="1" fill="#5b5e6e"/></g></svg></div><div class="t" style="left:197px;top:463px;width:58px;text-align:center;font-size:12px;color:#5d6070">分片</div><div class="abs" style="left:263px;top:397px;width:58px;height:58px;border-radius:6px;background:#252731;border:1px solid #2c2e3a"><svg class="abs" style="left:8px;top:8px" width="40" height="40" viewBox="0 0 40 40"><g transform="translate(0 -1.300)"><path d="M5 34l3-14 3 14z" fill="#a9c2ff"/><path d="M16.500 34l3.300-26 3.300 26z" fill="#1f6bff"/><path d="M28 34l3-18 3 18z" fill="#a9c2ff"/><rect x="1" y="34" width="38" height="1" fill="#5b5e6e"/></g></svg></div><div class="t" style="left:263px;top:463px;width:58px;text-align:center;font-size:12px;color:#5d6070">三角形</div><div class="abs" style="left:329px;top:397px;width:58px;height:58px;border-radius:6px;background:#252731;border:1px solid #2c2e3a"><svg class="abs" style="left:8px;top:8px" width="40" height="40" viewBox="0 0 40 40"><g transform="translate(0 -1.300)"><path d="M2 34c5-.5 6-3 7-9 1 6 2 8.500 7 9z" fill="#a9c2ff"/><path d="M12 34c6-.5 7-6 8-18 1 12 2 17.500 8 18z" fill="#1f6bff"/><path d="M24 34c5-.5 6-4 7-11 1 7 2 10.500 7 11z" fill="#a9c2ff"/><rect x="1" y="34" width="38" height="1" fill="#4a4d5c"/></g></svg></div><div class="t" style="left:329px;top:463px;width:58px;text-align:center;font-size:12px;color:#5d6070">象形</div>
<div class="lab" style="left:31px;top:495px">柱体宽</div>
<div class="abs" style="left:131px;top:498px;width:160px;height:4px;border-radius:2px;background:#e6e6ee"></div>
<div class="abs" style="left:124px;top:493px;width:14px;height:14px;border-radius:7px;background:#fff"></div>
<div class="inp" style="left:307px;top:484px;width:80px;height:32px"><b style="left:14px;top:9px;font-size:14px">auto</b><i style="right:9px;top:8px;font-size:14px">%</i></div>
<div class="lab" style="left:31px;top:535px">柱体间距</div>
<div class="abs" style="left:131px;top:538px;width:160px;height:4px;border-radius:2px;background:#e6e6ee"></div>
<div class="abs" style="left:131px;top:538px;width:64px;height:4px;border-radius:2px;background:#1f6bff"></div>
<div class="abs" style="left:188px;top:533px;width:14px;height:14px;border-radius:7px;background:#fff"></div>
<div class="inp" style="left:307px;top:524px;width:80px;height:32px"><b style="left:15px;top:10px">40</b><i style="right:9px;top:8px;font-size:14px">%</i></div>
<div class="lab" style="left:31px;top:575px">柱体圆角</div>
<div class="inp" style="left:131px;top:564px;width:102px;height:32px"><svg class="abs" style="left:16px;top:8px" width="14" height="14" viewBox="0 0 14 14" fill="none" stroke="#5d606f" stroke-width="1.300"><path d="M1 13V6a5 5 0 0 1 5-5h7"/></svg><b style="left:48px;top:10px">0</b></div>
<div class="inp" style="left:241px;top:564px;width:102px;height:32px"><svg class="abs" style="left:16px;top:8px" width="14" height="14" viewBox="0 0 14 14" fill="none" stroke="#5d606f" stroke-width="1.300"><path d="M1 1h7a5 5 0 0 1 5 5v7"/></svg><b style="left:48px;top:10px">0</b></div>
<div class="inp" style="left:350px;top:565px;width:37px;height:32px;background:#23252f;border-color:#262833"><svg class="abs" style="left:11px;top:7px" width="14" height="16" viewBox="0 0 14 16" fill="none" stroke="#5d606f" stroke-width="1.300" stroke-linecap="round"><path d="M3.500 6V5a3.500 3.500 0 0 1 7 0v1M3.500 10v1a3.500 3.500 0 0 0 7 0v-1M7 4.500v7M1 8h12"/></svg></div>
<div class="inp" style="left:131px;top:604px;width:102px;height:32px"><svg class="abs" style="left:16px;top:8px" width="14" height="14" viewBox="0 0 14 14" fill="none" stroke="#5d606f" stroke-width="1.300"><path d="M1 1v7a5 5 0 0 0 5 5h7"/></svg><b style="left:48px;top:10px">0</b></div>
<div class="inp" style="left:241px;top:604px;width:102px;height:32px"><svg class="abs" style="left:16px;top:8px" width="14" height="14" viewBox="0 0 14 14" fill="none" stroke="#5d606f" stroke-width="1.300"><path d="M13 1v7a5 5 0 0 1-5 5H1"/></svg><b style="left:48px;top:10px">0</b></div>
<div class="lab" style="left:31px;top:655px">柱体背景</div>
<div class="abs" style="left:131px;top:644px;width:256px;height:32px;background:#23252f;border-radius:4px">
  <div class="abs" style="left:8px;top:7px;width:18px;height:18px;border-radius:3px;background-color:#fff;background-image:linear-gradient(45deg,#c8c8c8 25%,transparent 25%,transparent 75%,#c8c8c8 75%),linear-gradient(45deg,#c8c8c8 25%,transparent 25%,transparent 75%,#c8c8c8 75%);background-size:12px 12px;background-position:0 0,6px 6px"></div>
  <div class="t" style="left:30px;top:10px;font-size:14px">#000000</div>
</div>
<svg class="abs" style="left:20px;top:688px" width="6" height="9" viewBox="0 0 6 9" fill="none" stroke="#d9dae0" stroke-width="1.300"><path d="M.7.7l3.800 3.800L.7 8.300"/></svg><div class="t" style="left:33px;top:687px;font-size:12px;font-weight:700">显示方式</div>
<svg class="abs" style="left:20px;top:720px" width="6" height="9" viewBox="0 0 6 9" fill="none" stroke="#d9dae0" stroke-width="1.300"><path d="M.7.7l3.800 3.800L.7 8.300"/></svg><div class="t" style="left:33px;top:719px;font-size:12px;font-weight:500;color:#c9cbd3">显示数据</div>
<div class="sw" style="left:131px;top:716px"></div>
<div class="t" style="left:33px;top:751px;font-size:12px;font-weight:500">启用迷你图</div>
<div class="sw" style="left:131px;top:748px"></div>
<div class="t" style="left:33px;top:783px;font-size:12px;font-weight:500">启用数据缩放</div>
<div class="sw" style="left:131px;top:780px"></div>
<div class="t" style="left:33px;top:815px;font-size:12px;font-weight:500">开启提示信息</div>
<div class="sw on" style="left:131px;top:812px"></div>
<svg class="abs" style="left:21px;top:858px" width="6" height="8" viewBox="0 0 6 8" fill="#fff"><path d="M.5 0v8L5.500 4z"/></svg><div class="t" style="left:34px;top:855px;font-size:14px;font-weight:900">X轴</div>
<svg class="abs" style="left:21px;top:900px" width="6" height="8" viewBox="0 0 6 8" fill="#fff"><path d="M.5 0v8L5.500 4z"/></svg><div class="t" style="left:34px;top:898px;font-size:14px;font-weight:900">Y轴</div>
<svg class="abs" style="left:21px;top:943px" width="6" height="8" viewBox="0 0 6 8" fill="#fff"><path d="M.5 0v8L5.500 4z"/></svg><div class="t" style="left:34px;top:941px;font-size:14px;font-weight:900">图例设置</div>
<svg class="abs" style="left:21px;top:986px" width="6" height="8" viewBox="0 0 6 8" fill="#fff"><path d="M.5 0v8L5.500 4z"/></svg><div class="t" style="left:34px;top:984px;font-size:14px;font-weight:900">数据配置</div>
<div class="abs" style="left:331px;top:977px;width:24px;height:24px;background:#23252f;border-radius:3px"><svg class="abs" style="left:6px;top:6px" width="12" height="12" viewBox="0 0 12 12"><rect width="12" height="12" rx="2" fill="#fff"/><path d="M6 3v6M3 6h6" stroke="#23252f" stroke-width="1.200"/></svg></div>
<div class="abs" style="left:363px;top:977px;width:24px;height:24px;background:#23252f;border-radius:3px"><svg class="abs" style="left:7px;top:6px" width="11" height="12" viewBox="0 0 11 12" fill="#fff"><rect x="0" y="1.500" width="11" height="1.600"/><rect x="3.500" y="0" width="4" height="1.600"/><path d="M1.200 4h8.600l-.5 8H1.700zM4 5.500v5h1v-5zM6 5.500v5h1v-5z" fill-rule="evenodd"/></svg></div>
<div class="t" style="left:83px;top:1190px;font-size:24px;color:#d6d6da;letter-spacing:.65px">掘金技术社区 @ 软件部长</div>
</div>
<div class="abs" style="left:2148.500px;top:324.500px;width:410.500px;height:796px;border:5.500px solid #f5271a;border-radius:5px"></div>
<div class="abs" style="left:0;top:0;width:1px;height:1305px;background:#e4e4e8"></div>
</div>
</body>
</html>
